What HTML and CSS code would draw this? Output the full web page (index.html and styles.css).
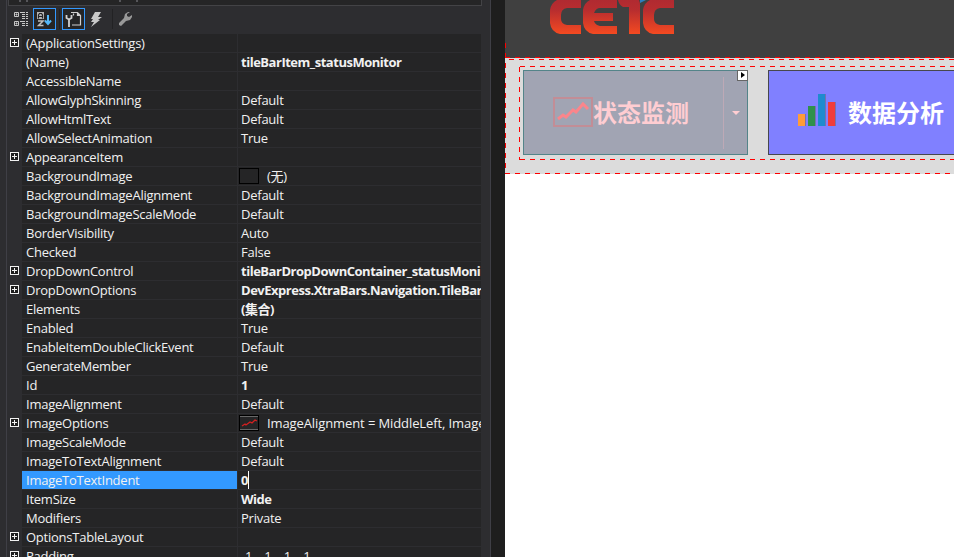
FILE: index.html
```
<!DOCTYPE html>
<html lang="zh">
<head>
<meta charset="utf-8">
<title>Properties</title>
<link rel="stylesheet" href="styles.css">
</head>
<body>
<div class="app">
  <div class="edge"></div>
  <section class="panel">
    <div class="selector"><i></i><i></i><i></i><i></i></div>
    <div class="toolbar">
      <span class="tool"><svg width="15" height="15" viewBox="0 0 15 15"><g fill="none" stroke="#c8c8c8"><path d="M.5 .5h4v4h-4zM.5 9.500h4v4h-4zM2.500 1.500v2M1.500 2.500h2M2.500 10.500v2M1.500 11.500h2"/><path d="M6 .5h5M12 .5h2M8 2.500h3M12 2.500h2M8 4.500h3M12 4.500h2M8 6.500h3M12 6.500h2M6 9.500h5M12 9.500h2M8 11.500h3M12 11.500h2M8 13.500h3M12 13.500h2"/></g></svg></span>
      <span class="tool on"><svg width="15" height="15" viewBox="0 0 15 15"><path fill="#b4b4b4" d="M0 0h7v7H0z"/><path fill="none" stroke="#252526" stroke-width="1.200" d="M1.500 6.500V3l1-1.500h2l1 1.500v3.500M2 4.500h3"/><path fill="none" stroke="#c0c0c0" stroke-width="1.500" d="M1 9h5L1.500 13.500H6.500"/><path fill="none" stroke="#55b8fa" stroke-width="2" d="M11 3v9M8 8.500l3 3.500 3-3.500"/></svg></span>
      <i class="sep"></i>
      <span class="tool on"><svg width="17" height="16" viewBox="0 0 17 16"><path fill="none" stroke="#d0d0d0" stroke-width="1.200" d="M6 1.500h6.500l3 3v9.500H7M12.500 1.500v3h3M8.500 4.500v-2"/><path fill="none" stroke="#d0d0d0" stroke-width="1.800" d="M1.500 4v3l2.500 1.500L6.500 7V4M4 8v8"/></svg></span>
      <span class="tool"><svg width="13" height="15" viewBox="0 0 13 15"><path fill="#c8c8c8" d="M5 0h6L8 5h4L8 8h2L1 15l3-5H1l2-3H1z"/></svg></span>
      <i class="sep"></i>
      <span class="tool last"><svg width="14" height="14" viewBox="0 0 14 14"><path fill="#999" d="M9 0 6 2 5 6 0 11v2l2 1 5-5 4-1 2-3V3l-3 2-2-1V2l3-2z"/></svg></span>
    </div>
    <div class="grid" id="grid"></div>
  </section>
  <div class="gap"></div>
  <main class="designer">
    <header class="brand">
      <svg width="130" height="35" viewBox="0 0 130 35"><defs><linearGradient id="g" x1="0" y1="0" x2="0" y2="34" gradientUnits="userSpaceOnUse"><stop offset="0" stop-color="#b02a31"/><stop offset=".3" stop-color="#b82d2f"/><stop offset="1" stop-color="#f44a21"/></linearGradient></defs>
      <g fill="url(#g)"><path d="M7 0h24v8H17q-6 1-6 7v4q0 5 6 6h14v9H10Q1 32 0 23V10Q1 3 7 0zM40 0h27v8H50q-4 0-6 5h19v8H44q1 4 6 5h17v8H43Q34 32 33 23V10Q34 3 40 0zM68 0h21q1 2 1 6v28H79V7h-6q-4-2-5-7zM100 0h24v8h-14q-6 1-6 7v4q0 5 6 6h14v9h-21q-9-2-10-11V10q1-7 7-10z"/></g><path fill="#287fc2" d="M90 0h6l-6 3z"/></svg>
    </header>
    <div class="bar">
      <svg class="marks" width="449" height="131" viewBox="0 0 449 131"><path d="M.5 0v131M0 14.500h449M4 16.500h445M14.500 24v93M15 23.500h434M15 116.500h434M0 130.500h449"/></svg>
      <div class="tile selected">
        <svg class="chart" width="40" height="30" viewBox="0 0 40 30"><path fill="none" stroke="#c28d96" stroke-width="2" d="M1 1h38v28H1z"/><path fill="none" stroke="#fb858b" stroke-width="3" d="m5 22 5-4 3 2 7-7 3 2 7-8 5 5"/></svg>
        <span class="label">状态监测</span>
        <span class="drop"><i></i></span>
        <span class="tag"><i></i></span>
      </div>
      <div class="tile blue">
        <svg class="bars" width="40" height="34" viewBox="0 0 40 34"><path fill="#ff9c38" d="M0 21h7v12H0z"/><path fill="#2f914b" d="M10 13h7v20h-7z"/><path fill="#1e8bcf" d="M20 1h7v32h-7z"/><path fill="#f03c3c" d="M30 9h7v24h-7z"/><path fill="#7770ae" d="M7 21h1v12H7zM17 13h1v20h-1zM27 1h1v32h-1zM37 9h1v24h-1z"/></svg>
        <span class="label">数据分析</span>
      </div>
    </div>
  </main>
</div>
<script src="grid.js"></script>
</body>
</html>
```
FILE: grid.js
```
const rows = [
  ["(ApplicationSettings)", "", "x"],
  ["(Name)", "tileBarItem_statusMonitor", "b"],
  ["AccessibleName", ""],
  ["AllowGlyphSkinning", "Default"],
  ["AllowHtmlText", "Default"],
  ["AllowSelectAnimation", "True"],
  ["AppearanceItem", "", "x"],
  ["BackgroundImage", "(无)", "i"],
  ["BackgroundImageAlignment", "Default"],
  ["BackgroundImageScaleMode", "Default"],
  ["BorderVisibility", "Auto"],
  ["Checked", "False"],
  ["DropDownControl", "tileBarDropDownContainer_statusMoni", "xb"],
  ["DropDownOptions", "DevExpress.XtraBars.Navigation.TileBar", "xb"],
  ["Elements", "(集合)", "b"],
  ["Enabled", "True"],
  ["EnableItemDoubleClickEvent", "Default"],
  ["GenerateMember", "True"],
  ["Id", "1", "b"],
  ["ImageAlignment", "Default"],
  ["ImageOptions", "ImageAlignment = MiddleLeft, Image", "xic"],
  ["ImageScaleMode", "Default"],
  ["ImageToTextAlignment", "Default"],
  ["ImageToTextIndent", "0", "bs"],
  ["ItemSize", "Wide", "b"],
  ["Modifiers", "Private"],
  ["OptionsTableLayout", "", "x"],
  ["Padding", "-1, -1, -1, -1", "xp"]
];
const line = '<svg width="18" height="14" viewBox="0 0 18 14"><path stroke="#686868" d="M0 .5h18M0 13.500h18"/><path fill="none" stroke="#d32020" stroke-width="1.300" d="m2 10 3-2 1 1 4-3 2 1 3-3 2 1"/></svg>';
document.getElementById("grid").innerHTML = rows.map(([name, value, f = ""]) => {
  const plus = f.includes("x") ? '<i class="plus"></i>' : "";
  const thumb = f.includes("i") ? `<span class="thumb">${f.includes("c") ? line : ""}</span>` : "";
  const cls = "value" + (f.includes("b") ? " bold" : "") + (f.includes("p") ? " wide" : "") + (f.includes("c") ? " summary" : "");
  return `<div class="row${f.includes("s") ? " active" : ""}"><div class="gutter">${plus}</div><div class="name">${name}</div><div class="${cls}">${thumb}<span>${value}</span></div></div>`;
}).join("");
```
FILE: styles.css
```
* { box-sizing: border-box; }
body { margin: 0; overflow: hidden; font: 13px/18px "Open Sans", "Noto Sans CJK SC", sans-serif; letter-spacing: -.24px; color: #f1f1f1; }
svg { display: block; flex: none; }
.app { display: flex; width: 954px; height: 557px; overflow: hidden; background: #1e1e1e; }
.edge { width: 7px; background: #2d2d30; border-right: 1px solid #3f3f46; }
.panel { width: 475px; background: #2d2d30; }
.selector { height: 6px; margin: 0 0 0 1px; padding-left: 10px; display: flex; background: #252526; border: solid #434346; border-width: 0 1px 1px; }
.selector i { width: 2px; height: 2px; margin-right: 5px; background: #56565a; }
.selector i:nth-child(2) { margin-right: 91px; }
.selector i:nth-child(3) { margin-right: 15px; }
.toolbar { height: 28px; display: flex; align-items: center; padding: 0 0 2px 2px; }
.tool { width: 23px; height: 22px; display: flex; align-items: center; justify-content: center; margin-right: 1px; }
.tool:first-child { padding-left: 2px; }
.tool.on { border: 1px solid #3399ff; background: #252526; }
.tool.on + .tool { padding-right: 2px; }
.tool.last { padding-right: 1px; }
.sep { width: 1px; height: 20px; margin: 0 2px; background: #222224; }
.row { display: flex; height: 19px; }
.gutter { width: 15px; padding: 4px 0 0 3px; }
.plus { display: block; width: 9px; height: 9px; border: 1px solid #f1f1f1; background: linear-gradient(#f1f1f1, #f1f1f1) center / 5px 1px no-repeat, linear-gradient(#f1f1f1, #f1f1f1) center / 1px 5px no-repeat #1e1e1e; }
.name, .value { background: #252526; border-bottom: 1px solid #2d2d30; white-space: nowrap; overflow: hidden; }
.name { width: 216px; padding: 1px 0 0 4px; border-right: 1px solid #2d2d30; }
.name, .value span { line-height: 18px; }
.name { padding-top: 0; }
.value { width: 243px; padding-left: 3px; display: flex; }
.bold { font-weight: 700; letter-spacing: -.48px; }
.summary { letter-spacing: -.1px; }
.active .name { background: #3399ff; }
.active .value span { border-right: 1px solid #fff; }
.thumb { flex: none; width: 20px; height: 16px; margin: 1px 8px 0 -2px; border: 1px solid #000; }
.wide { word-spacing: 2px; }
.gap { width: 23px; border-left: 8px solid #2d2d30; box-shadow: inset 1px 0 #3f3f46; }
.designer { width: 449px; background: #fff; }
.brand { height: 58px; padding-left: 45px; background: #404040; }
.bar { position: relative; height: 116px; padding: 12px 0 0 18px; display: flex; gap: 20px; background: #dcdcdc; }
.marks { position: absolute; left: 0; top: -15px; fill: none; stroke: #f00; stroke-dasharray: 5 5; }
.tile { position: relative; flex: none; width: 225px; height: 85px; display: flex; align-items: center; border: 1px solid #47474d; background: #8080ff; }
.selected { background: #a1a4b3; border-color: #538489; padding-left: 29px; }
.chart { margin-bottom: 1px; }
.blue { padding-left: 29px; }
.bars { margin: 0 10px 5px 0; }
.label { font: 700 24px/30px "Noto Sans CJK SC", sans-serif; letter-spacing: 0; margin-bottom: 2px; color: #fff; }
.selected .label { color: #ffcdd2; }
.drop { width: 24px; height: 72px; margin-left: auto; display: flex; align-items: center; justify-content: center; border-left: 1px solid #bda9b6; }
.drop i { border: solid transparent; border-width: 4px 4px 0; border-top-color: #ffcdd2; }
.tag { position: absolute; right: 0; top: 0; width: 9px; height: 9px; padding: 1px 3px; background: #fff; outline: 1px solid #666; }
.tag i { display: block; border: solid transparent; border-width: 3px 0 3px 4px; border-left-color: #000; }
```
